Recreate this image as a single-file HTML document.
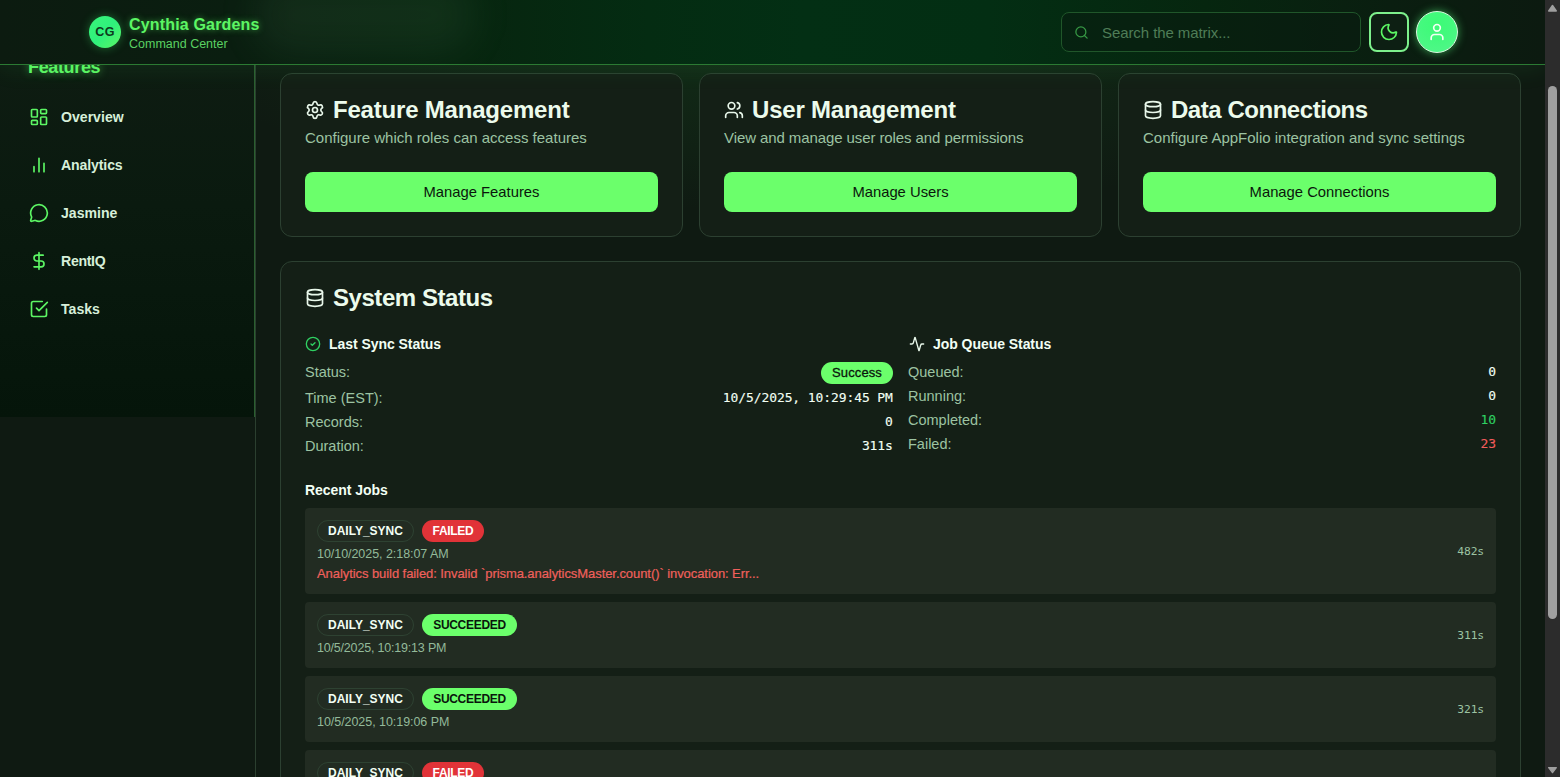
<!DOCTYPE html>
<html lang="en">
<head>
<meta charset="utf-8">
<title>Cynthia Gardens Command Center</title>
<style>
*{box-sizing:border-box;margin:0;padding:0}
html,body{width:1560px;height:777px;overflow:hidden;background:#0f1a12;}
body{font-family:"Liberation Sans",sans-serif;color:#eefbef;position:relative;}
.abs{position:absolute}
.mono{font-family:"DejaVu Sans Mono","Liberation Mono",monospace}
svg{display:block}
/* page */
#page{position:absolute;left:0;top:0;width:1545px;height:777px;overflow:hidden;background:#0f1a12;}
#pageglow{position:absolute;left:0;top:0;width:1545px;height:777px;
 background:radial-gradient(ellipse 900px 260px at 800px 30px, rgba(30,120,45,.22), rgba(30,120,45,0) 70%);}
/* sidebar */
#sidebar{position:absolute;left:0;top:64px;width:256px;height:713px;border-right:1px solid #2b3f2f;}
#sidebg{position:absolute;left:0;top:0;width:255px;height:353px;border-right:1px solid #2a5f2f;background:linear-gradient(180deg,#0e1c12 0%,#0a1a0f 40%,#05150a 100%);}
.nav{position:absolute;left:29px;height:20px;display:flex;align-items:center;font-weight:bold;font-size:14.1px;color:#d6efd9;white-space:nowrap}
.nav svg{width:20px;height:20px;margin-right:12px;stroke:#5cf664;fill:none;stroke-width:2;stroke-linecap:round;stroke-linejoin:round}
#feat{position:absolute;left:28px;top:-7px;letter-spacing:-.35px;font-weight:bold;font-size:18px;color:#5cf664;text-shadow:0 0 8px rgba(92,246,100,.6);white-space:nowrap}
/* header */
#header{position:absolute;left:0;top:0;width:1545px;height:65px;border-bottom:1px solid #2b7a33;box-shadow:0 2px 26px rgba(60,220,90,.10);
 background:linear-gradient(90deg,#0c1b10 0%,#0a1e10 15%,#07250f 30%,#042c12 42%,#032f14 52%,#032e13 64%,#06260f 78%,#0a1e10 90%,#0c1a10 100%);overflow:hidden}
#hshade{position:absolute;left:255px;top:-24px;width:220px;height:78px;border-radius:36px;background:rgba(120,175,125,.085);filter:blur(18px)}
#logo{position:absolute;left:89px;top:16px;width:32px;height:32px;border-radius:50%;
 background:linear-gradient(135deg,#39f57a 0%,#2ff07c 50%,#5cf664 100%);box-shadow:0 0 10px rgba(60,245,110,.35);
 color:#0d3a1c;font-weight:bold;font-size:12.5px;display:flex;align-items:center;justify-content:center;letter-spacing:.3px}
#title{position:absolute;left:129px;top:16px;letter-spacing:.17px;font-weight:bold;font-size:16px;line-height:18px;color:#5cf664;text-shadow:0 0 6px rgba(92,246,100,.55);white-space:nowrap}
#subtitle{position:absolute;left:129px;top:37px;font-size:12.5px;line-height:15px;color:#5ad162;white-space:nowrap}
#search{position:absolute;left:1061px;top:12px;width:300px;height:40px;border:1px solid #20562a;border-radius:8px;background:rgba(10,28,16,.55)}
#search span{position:absolute;left:40px;top:11px;letter-spacing:-.08px;font-size:15px;line-height:18px;color:#4f7d57;white-space:nowrap}
#search svg{position:absolute;left:12px;top:12px;width:15px;height:15px;stroke:#379a45;fill:none;stroke-width:2;stroke-linecap:round;stroke-linejoin:round}
#moon{position:absolute;left:1369px;top:12px;width:40px;height:40px;border:2px solid #7df08c;border-radius:8px;background:#0d1f13}
#moon svg{position:absolute;left:7.6px;top:7.7px;width:20px;height:20px;stroke:#5cf664;fill:none;stroke-width:2;stroke-linecap:round;stroke-linejoin:round}
#user{position:absolute;left:1416px;top:11px;width:42px;height:42px;border-radius:50%;border:1px solid #d8ffe0;
 background:radial-gradient(circle at 50% 30%,#3cfb76 0%,#44f97e 45%,#54f68c 100%);box-shadow:0 0 9px rgba(90,255,130,.55)}
#user svg{position:absolute;left:10px;top:10px;width:20px;height:20px;stroke:#f2fff4;fill:none;stroke-width:2;stroke-linecap:round;stroke-linejoin:round}
/* cards */
.card{position:absolute;border:1px solid #2c4031;border-radius:12px;background:#141f16}
.ctitle{position:absolute;left:52px;top:21px;font-weight:bold;font-size:24px;line-height:30px;color:#ecfbec;white-space:nowrap;letter-spacing:-.2px}
.cicon{position:absolute;left:24px;top:26px;width:20px;height:20px;stroke:#e8f7ea;fill:none;stroke-width:2;stroke-linecap:round;stroke-linejoin:round}
.csub{position:absolute;left:24px;top:55px;font-size:15px;line-height:18px;color:#9cc3a2;white-space:nowrap}
.btn{position:absolute;left:24px;top:98px;width:353px;height:40px;border-radius:8px;background:#6bff6b;color:#0a160c;font-size:14.8px;display:flex;align-items:center;justify-content:center;white-space:nowrap}
/* system */
.h3{position:absolute;font-weight:bold;letter-spacing:-.05px;font-size:14px;line-height:18px;color:#f2fff4;white-space:nowrap}
.lbl{position:absolute;font-size:14.5px;line-height:18px;color:#9cc3a2;white-space:nowrap}
.val{position:absolute;letter-spacing:-.1px;-webkit-text-stroke:.12px currentColor;font-size:13px;line-height:16px;color:#f2fff4;white-space:nowrap;text-align:right}
.job{position:absolute;left:24px;width:1191px;border-radius:4px;background:#222c22}
.tag{position:absolute;left:12px;top:12px;height:22px;width:97px;text-align:center;border:1px solid #2e4232;border-radius:11px;padding:0;font-weight:bold;font-size:12px;line-height:20px;color:#f2fff4;white-space:nowrap}
.st{position:absolute;left:117px;top:12px;height:22px;border-radius:11px;padding:0;text-align:center;font-weight:bold;font-size:12px;letter-spacing:-.3px;line-height:22px;white-space:nowrap}
.st.f{background:#e13338;color:#fff;width:62px}
.st.s{background:#6bff6b;color:#0a160c;width:95px}
.dt{position:absolute;left:12px;top:38px;letter-spacing:-.05px;font-size:12.5px;line-height:16px;color:#93ba9a;white-space:nowrap}
.err{position:absolute;left:12px;top:58px;letter-spacing:-.07px;font-size:13px;line-height:16px;color:#f0605c;-webkit-text-stroke:.2px #f0605c;white-space:nowrap}
.dur{position:absolute;right:12px;letter-spacing:-.12px;font-size:11.3px;line-height:14px;color:#9cc3a2;white-space:nowrap}
/* scrollbar */
#sb{position:absolute;left:1545px;top:0;width:15px;height:777px;background:#2c2c2c}
#thumb{position:absolute;left:3px;top:86px;width:9px;height:533px;border-radius:5px;background:#9f9f9f}
</style>
</head>
<body>
<div id="page">
<div id="pageglow"></div>

<!-- MAIN -->
<div id="main" class="abs" style="left:0;top:0;width:1545px;height:777px">
 <div class="card" style="left:280px;top:73px;width:403px;height:164px">
  <svg class="cicon" viewBox="0 0 24 24"><path d="M9.671 4.136a2.34 2.34 0 0 1 4.659 0 2.34 2.34 0 0 0 3.319 1.915 2.34 2.34 0 0 1 2.33 4.033 2.34 2.34 0 0 0 0 3.831 2.34 2.34 0 0 1-2.33 4.033 2.34 2.34 0 0 0-3.319 1.915 2.34 2.34 0 0 1-4.659 0 2.34 2.34 0 0 0-3.32-1.915 2.34 2.34 0 0 1-2.33-4.033 2.34 2.34 0 0 0 0-3.831A2.34 2.34 0 0 1 6.35 6.051a2.34 2.34 0 0 0 3.319-1.915"/><circle cx="12" cy="12" r="3"/></svg>
  <div class="ctitle">Feature Management</div>
  <div class="csub">Configure which roles can access features</div>
  <div class="btn">Manage Features</div>
 </div>
 <div class="card" style="left:699px;top:73px;width:403px;height:164px">
  <svg class="cicon" viewBox="0 0 24 24"><path d="M16 21v-2a4 4 0 0 0-4-4H6a4 4 0 0 0-4 4v2"/><circle cx="9" cy="7" r="4"/><path d="M22 21v-2a4 4 0 0 0-3-3.87"/><path d="M16 3.13a4 4 0 0 1 0 7.75"/></svg>
  <div class="ctitle">User Management</div>
  <div class="csub" style="letter-spacing:-.09px">View and manage user roles and permissions</div>
  <div class="btn">Manage Users</div>
 </div>
 <div class="card" style="left:1118px;top:73px;width:403px;height:164px">
  <svg class="cicon" viewBox="0 0 24 24"><ellipse cx="12" cy="5" rx="9" ry="3"/><path d="M3 5v14a9 3 0 0 0 18 0V5"/><path d="M3 12a9 3 0 0 0 18 0"/></svg>
  <div class="ctitle" style="letter-spacing:-.46px">Data Connections</div>
  <div class="csub">Configure AppFolio integration and sync settings</div>
  <div class="btn">Manage Connections</div>
 </div>
 <div class="card" style="left:280px;top:261px;width:1241px;height:700px">
  <svg class="cicon" viewBox="0 0 24 24"><ellipse cx="12" cy="5" rx="9" ry="3"/><path d="M3 5v14a9 3 0 0 0 18 0V5"/><path d="M3 12a9 3 0 0 0 18 0"/></svg>
  <div class="ctitle" style="letter-spacing:-.45px">System Status</div>

  <svg class="abs" style="left:24px;top:74px;width:16px;height:16px;stroke:#2fd062;fill:none;stroke-width:2;stroke-linecap:round;stroke-linejoin:round" viewBox="0 0 24 24"><circle cx="12" cy="12" r="10"/><path d="m9 12 2 2 4-4"/></svg>
  <div class="h3" style="left:48px;top:73px">Last Sync Status</div>
  <div class="lbl" style="left:24px;top:101px">Status:</div>
  <div class="lbl" style="left:24px;top:127px">Time (EST):</div>
  <div class="lbl" style="left:24px;top:151px">Records:</div>
  <div class="lbl" style="left:24px;top:175px">Duration:</div>
  <div class="abs" style="left:540px;top:100px;width:72px;height:22px;border-radius:11px;background:#6bff6b;color:#0a160c;font-size:13px;-webkit-text-stroke:.3px #0a160c;letter-spacing:.1px;line-height:22px;text-align:center">Success</div>
  <div class="val mono" style="right:627.2px;top:128px">10/5/2025, 10:29:45 PM</div>
  <div class="val mono" style="right:627.2px;top:152px">0</div>
  <div class="val mono" style="right:627.2px;top:176px">311s</div>

  <svg class="abs" style="left:628px;top:74px;width:16px;height:16px;stroke:#e8f7ea;fill:none;stroke-width:2;stroke-linecap:round;stroke-linejoin:round" viewBox="0 0 24 24"><path d="M22 12h-2.48a2 2 0 0 0-1.93 1.46l-2.35 8.36a.25.25 0 0 1-.48 0L9.24 2.18a.25.25 0 0 0-.48 0l-2.35 8.36A2 2 0 0 1 4.49 12H2"/></svg>
  <div class="h3" style="left:652px;top:73px">Job Queue Status</div>
  <div class="lbl" style="left:627px;top:101px">Queued:</div>
  <div class="lbl" style="left:627px;top:125px">Running:</div>
  <div class="lbl" style="left:627px;top:149px">Completed:</div>
  <div class="lbl" style="left:627px;top:173px">Failed:</div>
  <div class="val mono" style="right:24px;top:102px">0</div>
  <div class="val mono" style="right:24px;top:126px">0</div>
  <div class="val mono" style="right:24px;top:150px;color:#2fd062">10</div>
  <div class="val mono" style="right:24px;top:174px;color:#f25c5c">23</div>

  <div class="h3" style="left:24px;top:219px">Recent Jobs</div>

  <div class="job" style="top:246px;height:86px">
   <div class="tag">DAILY_SYNC</div><div class="st f">FAILED</div>
   <div class="dt">10/10/2025, 2:18:07 AM</div>
   <div class="err">Analytics build failed: Invalid `prisma.analyticsMaster.count()` invocation: Err...</div>
   <div class="dur mono" style="top:37px">482s</div>
  </div>
  <div class="job" style="top:340px;height:66px">
   <div class="tag">DAILY_SYNC</div><div class="st s">SUCCEEDED</div>
   <div class="dt" style="letter-spacing:-.19px">10/5/2025, 10:19:13 PM</div>
   <div class="dur mono" style="top:27px">311s</div>
  </div>
  <div class="job" style="top:414px;height:66px">
   <div class="tag">DAILY_SYNC</div><div class="st s">SUCCEEDED</div>
   <div class="dt">10/5/2025, 10:19:06 PM</div>
   <div class="dur mono" style="top:27px">321s</div>
  </div>
  <div class="job" style="top:488px;height:86px">
   <div class="tag">DAILY_SYNC</div><div class="st f">FAILED</div>
   <div class="dt">10/5/2025, 10:13:40 PM</div>
   <div class="dur mono" style="top:37px">482s</div>
  </div>
 </div>
</div>

<!-- SIDEBAR -->
<div id="sidebar">
 <div id="sidebg"></div>
 <div id="feat">Features</div>
 <div class="nav" style="top:43px"><svg viewBox="0 0 24 24"><rect x="3" y="3" width="7" height="9" rx="1"/><rect x="14" y="3" width="7" height="5" rx="1"/><rect x="14" y="12" width="7" height="9" rx="1"/><rect x="3" y="16" width="7" height="5" rx="1"/></svg>Overview</div>
 <div class="nav" style="top:91px;letter-spacing:-.12px"><svg viewBox="0 0 24 24"><path d="M6 20v-6M12 20V4M18 20V10"/></svg>Analytics</div>
 <div class="nav" style="top:139px"><svg viewBox="0 0 24 24"><path d="M2.992 16.342a2 2 0 0 1 .094 1.167l-1.065 3.29a1 1 0 0 0 1.236 1.168l3.413-.998a2 2 0 0 1 1.099.092 10 10 0 1 0-4.777-4.719"/></svg>Jasmine</div>
 <div class="nav" style="top:187px;letter-spacing:-.3px"><svg viewBox="0 0 24 24"><path d="M12 2v20M17 5H9.5a3.5 3.5 0 0 0 0 7h5a3.5 3.5 0 0 1 0 7H6"/></svg>RentIQ</div>
 <div class="nav" style="top:235px"><svg viewBox="0 0 24 24"><path d="m9 11 3 3L22 4"/><path d="M21 12v7a2 2 0 0 1-2 2H5a2 2 0 0 1-2-2V5a2 2 0 0 1 2-2h11"/></svg>Tasks</div>
</div>

<!-- HEADER -->
<div id="header">
 <div id="hshade"></div>
 <div id="logo">CG</div>
 <div id="title">Cynthia Gardens</div>
 <div id="subtitle">Command Center</div>
 <div id="search">
  <svg viewBox="0 0 24 24"><circle cx="11" cy="11" r="8"/><path d="m21 21-4.3-4.3"/></svg>
  <span>Search the matrix...</span>
 </div>
 <div id="moon"><svg viewBox="0 0 24 24"><path d="M20.985 12.486a9 9 0 1 1-9.473-9.472c.405-.022.617.46.402.803a6 6 0 0 0 8.268 8.268c.344-.215.825-.004.803.401"/></svg></div>
 <div id="user"><svg viewBox="0 0 24 24"><path d="M19 21v-2a4 4 0 0 0-4-4H9a4 4 0 0 0-4 4v2"/><circle cx="12" cy="7" r="4"/></svg></div>
</div>
</div>

<!-- SCROLLBAR -->
<div id="sb">
 <svg class="abs" style="left:0;top:0" width="15" height="15" viewBox="0 0 15 15"><path d="M7.5 5.5 L11.3 11 L3.7 11 Z" fill="#9f9f9f" stroke="#9f9f9f" stroke-width="1.4" stroke-linejoin="round"/></svg>
 <div id="thumb"></div>
 <svg class="abs" style="left:0;top:762px" width="15" height="15" viewBox="0 0 15 15"><path d="M3.7 5.6 L11.3 5.6 L7.5 10.6 Z" fill="#9f9f9f" stroke="#9f9f9f" stroke-width="1.4" stroke-linejoin="round"/></svg>
</div>
</body>
</html>
